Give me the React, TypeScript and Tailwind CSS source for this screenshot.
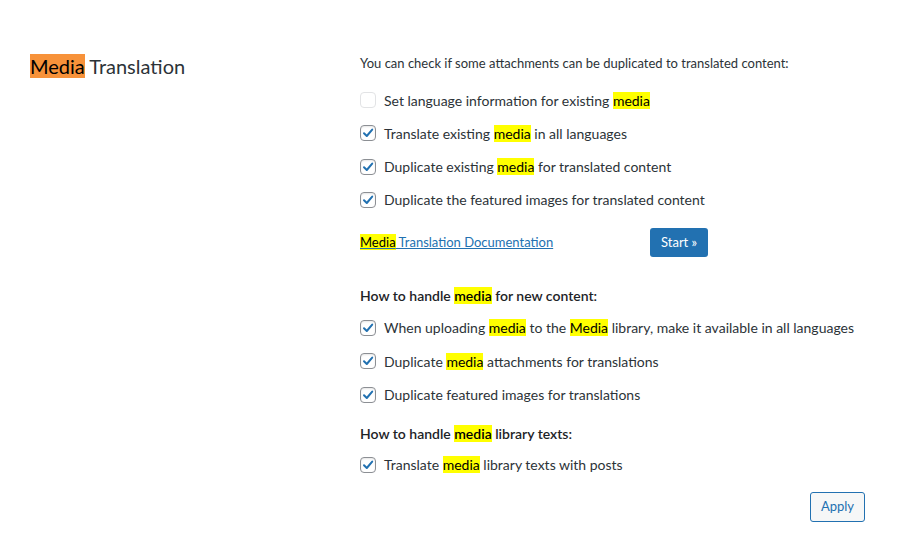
const font = { fontFamily: '"Segoe UI", Lato, "Liberation Sans", sans-serif' }

function Hl({ children }: { children: React.ReactNode }) {
  return <span className="bg-[#ffff00] text-black">{children}</span>
}

function Check({ checked, children }: { checked: boolean; children: React.ReactNode }) {
  return (
    <label className="flex items-center h-[20px] gap-[8px]">
      <span
        className={
          checked
            ? 'w-[16px] h-[16px] rounded-[4px] border border-[#8c8f94] bg-white flex items-center justify-center shadow-[inset_0_1px_2px_rgba(0,0,0,0.1)]'
            : 'w-[16px] h-[16px] rounded-[4px] border border-[#e2e3e5] bg-white'
        }
      >
        {checked && (
          <svg width="14" height="14" viewBox="0 0 14 14">
            <path d="M3 7.2 L5.8 10 L11.2 3.6" fill="none" stroke="#2271b1" strokeWidth="2" strokeLinecap="round" strokeLinejoin="round" />
          </svg>
        )}
      </span>
      <span className="text-[14px] text-[#2c3338]">{children}</span>
    </label>
  )
}

export default function App() {
  return (
    <div className="w-[901px] h-[550px] bg-white flex" style={font}>
      <div className="w-[331px] pl-[30px] pt-[55px]">
        <h2 className="text-[20px] leading-[23px] text-[#2c3338]">
          <span className="bg-[#f7923a] text-black">Media</span> Translation
        </h2>
      </div>
      <div className="flex-1 pt-[54px] pl-[29px] flex flex-col">
        <p className="text-[13px] leading-[18px] text-[#2c3338]">
          You can check if some attachments can be duplicated to translated content:
        </p>
        <div className="mt-[18px] flex flex-col gap-[13.3px]">
          <Check checked={false}>Set language information for existing <Hl>media</Hl></Check>
          <Check checked>Translate existing <Hl>media</Hl> in all languages</Check>
          <Check checked>Duplicate existing <Hl>media</Hl> for translated content</Check>
          <Check checked>Duplicate the featured images for translated content</Check>
        </div>
        <div className="mt-[18px] flex items-center">
          <a className="w-[290px] text-[13px] text-[#2271b1] underline">
            <Hl>Media</Hl> Translation Documentation
          </a>
          <button className="h-[29px] px-[11px] rounded-[3px] bg-[#2271b1] text-white text-[13px]">Start »</button>
        </div>
        <h4 className="mt-[29px] text-[14px] font-semibold text-[#1d2327] leading-[20px]">
          How to handle <Hl>media</Hl> for new content:
        </h4>
        <div className="mt-[12px] flex flex-col gap-[13.5px]">
          <Check checked>When uploading <Hl>media</Hl> to the <Hl>Media</Hl> library, make it available in all languages</Check>
          <Check checked>Duplicate <Hl>media</Hl> attachments for translations</Check>
          <Check checked>Duplicate featured images for translations</Check>
        </div>
        <h4 className="mt-[19px] text-[14px] font-semibold text-[#1d2327] leading-[20px]">
          How to handle <Hl>media</Hl> library texts:
        </h4>
        <div className="mt-[11px] flex flex-col">
          <Check checked>Translate <Hl>media</Hl> library texts with posts</Check>
        </div>
        <div className="mt-[17px] pr-[36px] flex justify-end">
          <button className="h-[30px] px-[10px] rounded-[3px] border border-[#2271b1] bg-[#f6f7f7] text-[#2271b1] text-[13px]">Apply</button>
        </div>
      </div>
    </div>
  )
}
